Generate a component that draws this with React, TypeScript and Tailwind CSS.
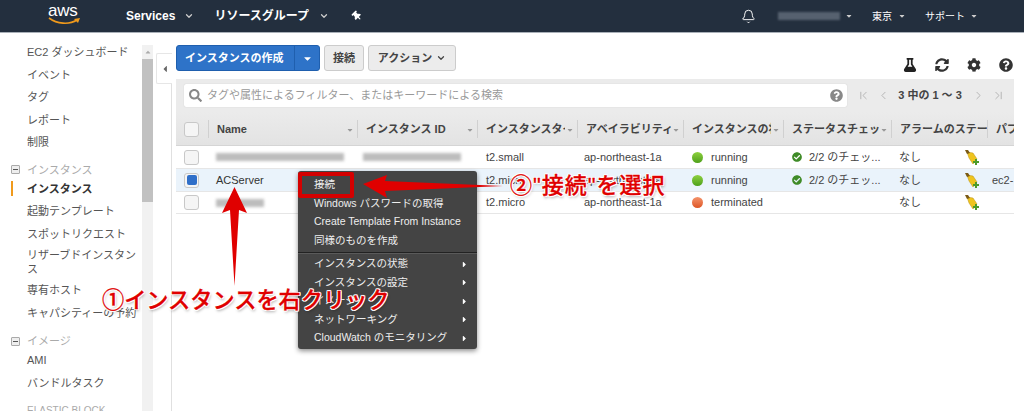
import type { ReactNode } from "react";
import { Bell, ChevronDown, ChevronFirst, ChevronLast, ChevronLeft, ChevronRight } from "lucide-react";
import { FaCaretDown, FaCaretLeft, FaCaretRight, FaCaretUp, FaCheckCircle, FaCog, FaFlask, FaQuestionCircle, FaSearch, FaSyncAlt, FaThumbtack } from "react-icons/fa";

const cols = "grid grid-cols-[32px_149px_120px_100px_106px_100px_108px_96px_27px]";

const Broom = () => (
  <svg width="15" height="15" viewBox="0 0 15 15">
    <path d="M2 2 L8 3 L12 9 L8 14 L4 8 Z" fill="#efc41e" stroke="#b8911a" strokeWidth="0.5" />
    <path d="M0 0 L3 0 L5 3 L2 4 Z" fill="#7a5a16" />
    <path d="M10 9 h2 v2 h2 v2 h-2 v2 h-2 v-2 h-2 v-2 h2 Z" fill="#4d9a2a" />
  </svg>
);

const Dot = ({ color }: { color: string }) => (
  <span className={"h-[11px] w-[11px] shrink-0 rounded-full bg-gradient-to-b " + color} />
);

const Check = ({ on }: { on?: boolean }) => (
  <span className="flex h-[15px] w-[15px] items-center justify-center rounded-[3px] border border-[#c8c8c8] bg-[#f5f5f5]">
    {on && <span className="h-[10px] w-[10px] rounded-[2px] bg-[#2f6fc9]" />}
  </span>
);

const Blurred = ({ w }: { w: number[] }) => (
  <span className="flex blur-[1.5px]">
    {w.map((v, i) => (
      <span key={i} className="h-[8px] bg-[#bdbdbd]" style={{ width: v }} />
    ))}
  </span>
);

const SideItem = ({ label, active }: { label: string; active?: boolean }) => (
  <div className={"relative flex h-[22.5px] shrink-0 items-center pl-[27px] " + (active ? "font-bold text-[#333]" : "text-[#555]")}>
    {active && <span className="absolute left-[11px] top-[3px] h-[15px] w-[2px] bg-[#f09a1c]" />}
    {label}
  </div>
);

const SideGroup = ({ label }: { label: string }) => (
  <div className="flex h-[16px] shrink-0 items-center gap-[7px] pl-[11px] text-[#aaa]">
    <span className="flex h-[9px] w-[9px] items-center justify-center rounded-[1px] border border-[#aaa] bg-[#eee]">
      <span className="h-[1px] w-[5px] bg-[#555]" />
    </span>
    {label}
  </div>
);

const Sidebar = () => (
  <aside className="flex w-[142px] shrink-0 flex-col pt-[8px] text-[11px] leading-[14px]">
    <SideItem label="EC2 ダッシュボード" />
    <SideItem label="イベント" />
    <SideItem label="タグ" />
    <SideItem label="レポート" />
    <SideItem label="制限" />
    <div className="h-[8px] shrink-0" />
    <SideGroup label="インスタンス" />
    <SideItem label="インスタンス" active />
    <SideItem label="起動テンプレート" />
    <SideItem label="スポットリクエスト" />
    <div className="shrink-0 py-[3px] pl-[27px] pr-[3px] text-[#555]">リザーブドインスタンス</div>
    <SideItem label="専有ホスト" />
    <SideItem label="キャパシティーの予約" />
    <div className="h-[9px] shrink-0" />
    <SideGroup label="イメージ" />
    <SideItem label="AMI" />
    <SideItem label="バンドルタスク" />
    <div className="mt-[10px] shrink-0 pl-[27px] text-[10px] text-[#aaa]">ELASTIC BLOCK</div>
  </aside>
);

const TopBar = () => (
  <header className="flex h-[33px] shrink-0 items-center border-b border-[#a9b0b8] bg-[#232f3e] text-white">
    <div className="relative ml-[48px] h-[32px] w-[33px]">
      <span className="absolute left-0 top-[1px] text-[17px] leading-[20px] tracking-[-0.3px]">aws</span>
      <svg className="absolute left-0 top-[17px]" width="33" height="9" viewBox="0 0 33 9">
        <path d="M1 1 C9 7 21 8 29 3" fill="none" stroke="#f09a1c" strokeWidth="1.6" />
        <path d="M26 2 L32 1 L30 6 Z" fill="#f09a1c" />
      </svg>
    </div>
    <span className="ml-[45px] text-[12px] font-bold">Services</span>
    <ChevronDown className="ml-[9px] h-[10px] w-[10px] text-[#ccc]" strokeWidth={3} />
    <span className="ml-[20px] text-[12px] font-bold">リソースグループ</span>
    <ChevronDown className="ml-[10px] h-[10px] w-[10px] text-[#ccc]" strokeWidth={3} />
    <FaThumbtack className="ml-[23px] h-[10px] w-[10px] -rotate-45" />
    <Bell className="ml-[379px] h-[15px] w-[15px]" strokeWidth={1.5} />
    <span className="ml-[22px] h-[8px] w-[62px] bg-[#56616f] blur-[1px]" />
    <FaCaretDown className="ml-[5px] h-[8px] w-[8px] text-[#ccc]" />
    <span className="ml-[19px] text-[10px]">東京</span>
    <FaCaretDown className="ml-[6px] h-[8px] w-[8px] text-[#ccc]" />
    <span className="ml-[19px] text-[10px]">サポート</span>
    <FaCaretDown className="ml-[5px] h-[8px] w-[8px] text-[#ccc]" />
  </header>
);

const Toolbar = () => (
  <div className="flex h-[26px] items-stretch text-[11px] font-bold">
    <div className="flex w-[144px] items-center rounded-[3px] border border-[#1f5fae] bg-[#2e73c8] text-white">
      <span className="w-[117px] pl-[8px]">インスタンスの作成</span>
      <span className="flex flex-1 items-center justify-center self-stretch border-l border-[#1f5fae]">
        <FaCaretDown className="h-[11px] w-[11px]" />
      </span>
    </div>
    <button className="ml-[4px] w-[40px] rounded-[3px] border border-[#ccc] bg-[#ececec] text-[#444]">接続</button>
    <button className="ml-[4px] flex w-[88px] items-center justify-center gap-[4px] rounded-[3px] border border-[#ccc] bg-[#ececec] text-[#444]">
      アクション
      <ChevronDown className="h-[10px] w-[10px]" strokeWidth={3} />
    </button>
    <div className="ml-auto flex items-center gap-[18px] pt-[14px] pr-[1px] text-[#333]">
      <FaFlask className="h-[14px] w-[14px] text-[#222]" />
      <FaSyncAlt className="h-[14px] w-[14px]" />
      <FaCog className="h-[14px] w-[14px]" />
      <FaQuestionCircle className="h-[14px] w-[14px]" />
    </div>
  </div>
);

const FilterBar = () => (
  <div className="flex h-[33px] items-center bg-[#ebebeb] pl-[8px] text-[#aaa]">
    <div className="flex h-[23px] w-[663px] items-center rounded-[2px] bg-white pl-[5px] pr-[4px] text-[11px] shadow-[0_0_1px_#bbb]">
      <FaSearch className="h-[13px] w-[13px] text-[#888]" />
      <span className="ml-[5px] flex-1 text-[#999]">タグや属性によるフィルター、またはキーワードによる検索</span>
      <FaQuestionCircle className="h-[13px] w-[13px] text-[#888]" />
    </div>
    <ChevronFirst className="ml-[10px] h-[13px] w-[13px]" strokeWidth={1.5} />
    <ChevronLeft className="ml-[7px] h-[13px] w-[13px]" strokeWidth={1.5} />
    <span className="ml-[8px] w-[64px] text-center text-[11px] font-bold text-[#444]">3 中の 1 ～ 3</span>
    <ChevronRight className="ml-[10px] h-[13px] w-[13px]" strokeWidth={1.5} />
    <ChevronLast className="ml-[7px] h-[13px] w-[13px]" strokeWidth={1.5} />
  </div>
);

const headers = ["Name", "インスタンス ID", "インスタンスタイプ", "アベイラビリティーゾーン", "インスタンスの状態", "ステータスチェック", "アラームのステータス", "パブリック"];

const TableHead = () => (
  <div className={cols + " h-[34px] items-center border-b border-[#d5d5d5] bg-gradient-to-b from-[#ebebeb] to-[#e3e3e3] pt-[1px] text-[11px] font-bold text-[#444]"}>
    <div className="pl-[8px]">
      <Check />
    </div>
    {headers.map((h, i) => (
      <div key={h} className="relative flex h-[18px] items-center overflow-hidden border-l border-[#d0d0d0] pl-[8px]">
        <span className={"overflow-hidden whitespace-nowrap " + (i >= 2 && i < 6 ? "mr-[12px]" : "")}>{h}</span>
        {i < 6 && <FaCaretDown className="absolute right-[3px] top-[6px] h-[8px] w-[8px] text-[#999]" />}
      </div>
    ))}
  </div>
);

type RowData = {
  name: ReactNode;
  id?: ReactNode;
  type: string;
  dot: string;
  state: string;
  status: boolean;
  dns?: string;
  selected?: boolean;
  h: string;
};

const green = "from-[#8ed13f] to-[#4ea01a]";

const rows: RowData[] = [
  { name: <Blurred w={[52, 40, 36]} />, id: <Blurred w={[98]} />, type: "t2.small", dot: green, state: "running", status: true, h: "h-[23px]" },
  { name: "ACServer", type: "t2.micro", dot: green, state: "running", status: true, dns: "ec2-", selected: true, h: "h-[23px]" },
  { name: <Blurred w={[48]} />, type: "t2.micro", dot: "from-[#f4936a] to-[#dd5522]", state: "terminated", status: false, h: "h-[22px]" },
];

const Row = ({ r }: { r: RowData }) => (
  <div className={cols + " items-center border-b border-[#e6e6e6] text-[11px] text-[#444] " + r.h + (r.selected ? " bg-[#eaf3fb]" : " bg-white")}>
    <div className="pl-[8px]">
      <Check on={r.selected} />
    </div>
    <div className="pl-[8px] text-[#333]">{r.name}</div>
    <div className="pl-[6px]">{r.id}</div>
    <div className="pl-[9px]">{r.type}</div>
    <div className="pl-[7px]">ap-northeast-1a</div>
    <div className="flex items-center gap-[8px] pl-[9px]">
      <Dot color={r.dot} />
      {r.state}
    </div>
    <div className="flex items-center gap-[7px] whitespace-nowrap pl-[9px]">
      {r.status && (
        <>
          <FaCheckCircle className="h-[10px] w-[10px] text-[#3f8b27]" />
          2/2 のチェッ...
        </>
      )}
    </div>
    <div className="flex items-center justify-between pl-[8px] pr-[7px]">
      なし
      <Broom />
    </div>
    <div className="overflow-hidden whitespace-nowrap pl-[5px]">{r.dns}</div>
  </div>
);

const ContextMenu = () => {
  const item = "flex h-[18.5px] items-center justify-between whitespace-nowrap pl-[16px] pr-[8px]";
  return (
    <div className="absolute left-[298px] top-[171px] h-[178px] w-[179px] rounded-[3px] bg-[#444] pt-[5px] text-[10.5px] text-[#eee] shadow-[0_2px_5px_rgba(0,0,0,0.45)]">
      <div className={item}>接続</div>
      <div className={item}>Windows パスワードの取得</div>
      <div className={item}>Create Template From Instance</div>
      <div className={item}>同様のものを作成</div>
      <div className="my-[2px] h-[1px] bg-[#222] shadow-[0_1px_0_#5a5a5a]" />
      {["インスタンスの状態", "インスタンスの設定", "イメージ", "ネットワーキング", "CloudWatch のモニタリング"].map((l) => (
        <div key={l} className={item}>
          {l}
          <FaCaretRight className="h-[9px] w-[9px] text-white" />
        </div>
      ))}
    </div>
  );
};

const outline =
  "[-webkit-text-stroke:0.3px_#e00000] [text-shadow:1px_1px_0_#fff,-1px_-1px_0_#fff,1px_-1px_0_#fff,-1px_1px_0_#fff,0_1px_0_#fff,1px_0_0_#fff,0_-1px_0_#fff,-1px_0_0_#fff,1px_2px_3px_rgba(0,0,0,0.35)]";

const Annotations = () => (
  <>
    <div className="absolute left-[298px] top-[172px] h-[26px] w-[56px] rounded-[2px] border-[4px] border-[#d40000]" />
    <svg className="absolute left-[210px] top-[170px]" width="300" height="120" viewBox="0 0 300 120">
      <path d="M24.5 17 L37 43 L29 40 L24.5 116 L20 40 L12 43 Z" fill="#e00000" />
      <path d="M153 14 L177 5 L175 11 L293 16 L175 21 L177 28 Z" fill="#e00000" />
    </svg>
    <div className={"absolute left-[102px] top-[285px] whitespace-nowrap text-[22.2px] font-medium leading-[32px] text-[#e00000] " + outline}>
      ①インスタンスを右クリック
    </div>
    <div className={"absolute left-[510px] top-[171px] whitespace-nowrap text-[22px] font-medium leading-[30px] tracking-[1px] text-[#e00000] " + outline}>
      ②"接続"を選択
    </div>
  </>
);

export default function App() {
  return (
    <div className="relative flex h-[411px] w-[1024px] flex-col overflow-hidden bg-white font-['Liberation_Sans','Noto_Sans_CJK_JP',sans-serif]">
      <TopBar />
      <div className="flex min-h-0 flex-1">
        <Sidebar />
        <div className="mt-[12px] flex w-[11px] shrink-0 flex-col items-center bg-[#f1f1f1]">
          <FaCaretUp className="mt-[3px] h-[8px] w-[8px] text-[#aaa]" />
          <div className="mt-[3px] h-[143px] w-full bg-[#c1c1c1]" />
        </div>
        <div className="ml-[3px] flex w-[16px] shrink-0 flex-col">
          <div className="mt-[20px] flex h-[31px] items-center justify-center rounded-l-[2px] border-y border-l border-[#e6e6e6]">
            <FaCaretLeft className="h-[10px] w-[10px] text-[#666]" />
          </div>
          <div className="flex-1 border-r border-[#e0e0e0]" />
        </div>
        <main className="ml-[4px] w-[838px] shrink-0 pt-[12px]">
          <Toolbar />
          <div className="mt-[8px]">
            <FilterBar />
            <TableHead />
            {rows.map((r, i) => (
              <Row key={i} r={r} />
            ))}
          </div>
        </main>
      </div>
      <ContextMenu />
      <Annotations />
    </div>
  );
}
